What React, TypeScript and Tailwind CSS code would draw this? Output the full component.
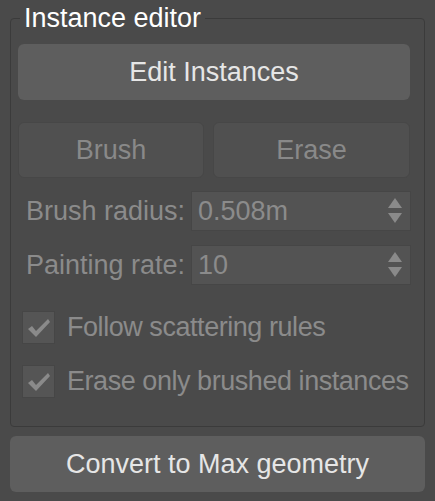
import React from 'react';

const font = { fontFamily: '"Liberation Sans", "DejaVu Sans", sans-serif' };

function SpinArrows() {
  return (
    <svg width="16" height="26" viewBox="0 0 16 26" className="shrink-0">
      <polygon points="8,0 15,10 1,10" fill="#8a8a8a" />
      <polygon points="1,15 15,15 8,25" fill="#8a8a8a" />
    </svg>
  );
}

function Spinner({ label, value }: { label: string; value: string }) {
  return (
    <div className="flex items-center h-[40px]">
      <div className="w-[173px] text-right pr-[6px] text-[#8b8b8b] whitespace-nowrap">{label}</div>
      <div className="flex items-center justify-between w-[220px] h-[40px] border border-[#464646] bg-[#535353] pl-[6px] pr-[7px]">
        <span className="text-[#8b8b8b]">{value}</span>
        <SpinArrows />
      </div>
    </div>
  );
}

function Check({ label }: { label: string }) {
  return (
    <div className="flex items-center h-[33px] pl-[4px]">
      <div className="w-[33px] h-[33px] shrink-0 border border-[#464646] bg-[#555555] flex items-center justify-center">
        <svg width="24" height="20" viewBox="0 0 24 20">
          <path d="M1 11 L5 8 L9 13 L21 1 L23 4 L9 19 Z" fill="#8a8a8a" />
        </svg>
      </div>
      <span className="ml-[12px] text-[#8b8b8b] whitespace-nowrap tracking-[-0.45px]">{label}</span>
    </div>
  );
}

export default function App() {
  return (
    <div className="w-[435px] h-[501px] bg-[#4a4a4a] px-[10px] pt-[1px] text-[27px] leading-none" style={font}>
      <fieldset className="border border-[#3b3b3b] rounded-[4px] h-[426px] px-[7px] pt-[9px]">
        <legend className="ml-[2px] px-[4px] text-white leading-[34px] text-[27px]">Instance editor</legend>
        <button className="w-[392px] h-[56px] rounded-[6px] bg-[#5e5e5e] text-[#e6e6e6]">Edit Instances</button>
        <div className="flex gap-[9px] mt-[22px] w-[392px]">
          <button className="w-[186px] h-[56px] rounded-[6px] border border-[#474747] bg-[#505050] text-[#898989]">Brush</button>
          <button className="flex-1 h-[56px] rounded-[6px] border border-[#474747] bg-[#505050] text-[#898989]">Erase</button>
        </div>
        <div className="flex flex-col gap-[14px] mt-[13px]">
          <Spinner label="Brush radius:" value="0.508m" />
          <Spinner label="Painting rate:" value="10" />
        </div>
        <div className="flex flex-col gap-[21px] mt-[26px]">
          <Check label="Follow scattering rules" />
          <Check label="Erase only brushed instances" />
        </div>
      </fieldset>
      <button className="w-[415px] h-[56px] mt-[9px] rounded-[6px] bg-[#5e5e5e] text-[#e6e6e6]">Convert to Max geometry</button>
    </div>
  );
}
